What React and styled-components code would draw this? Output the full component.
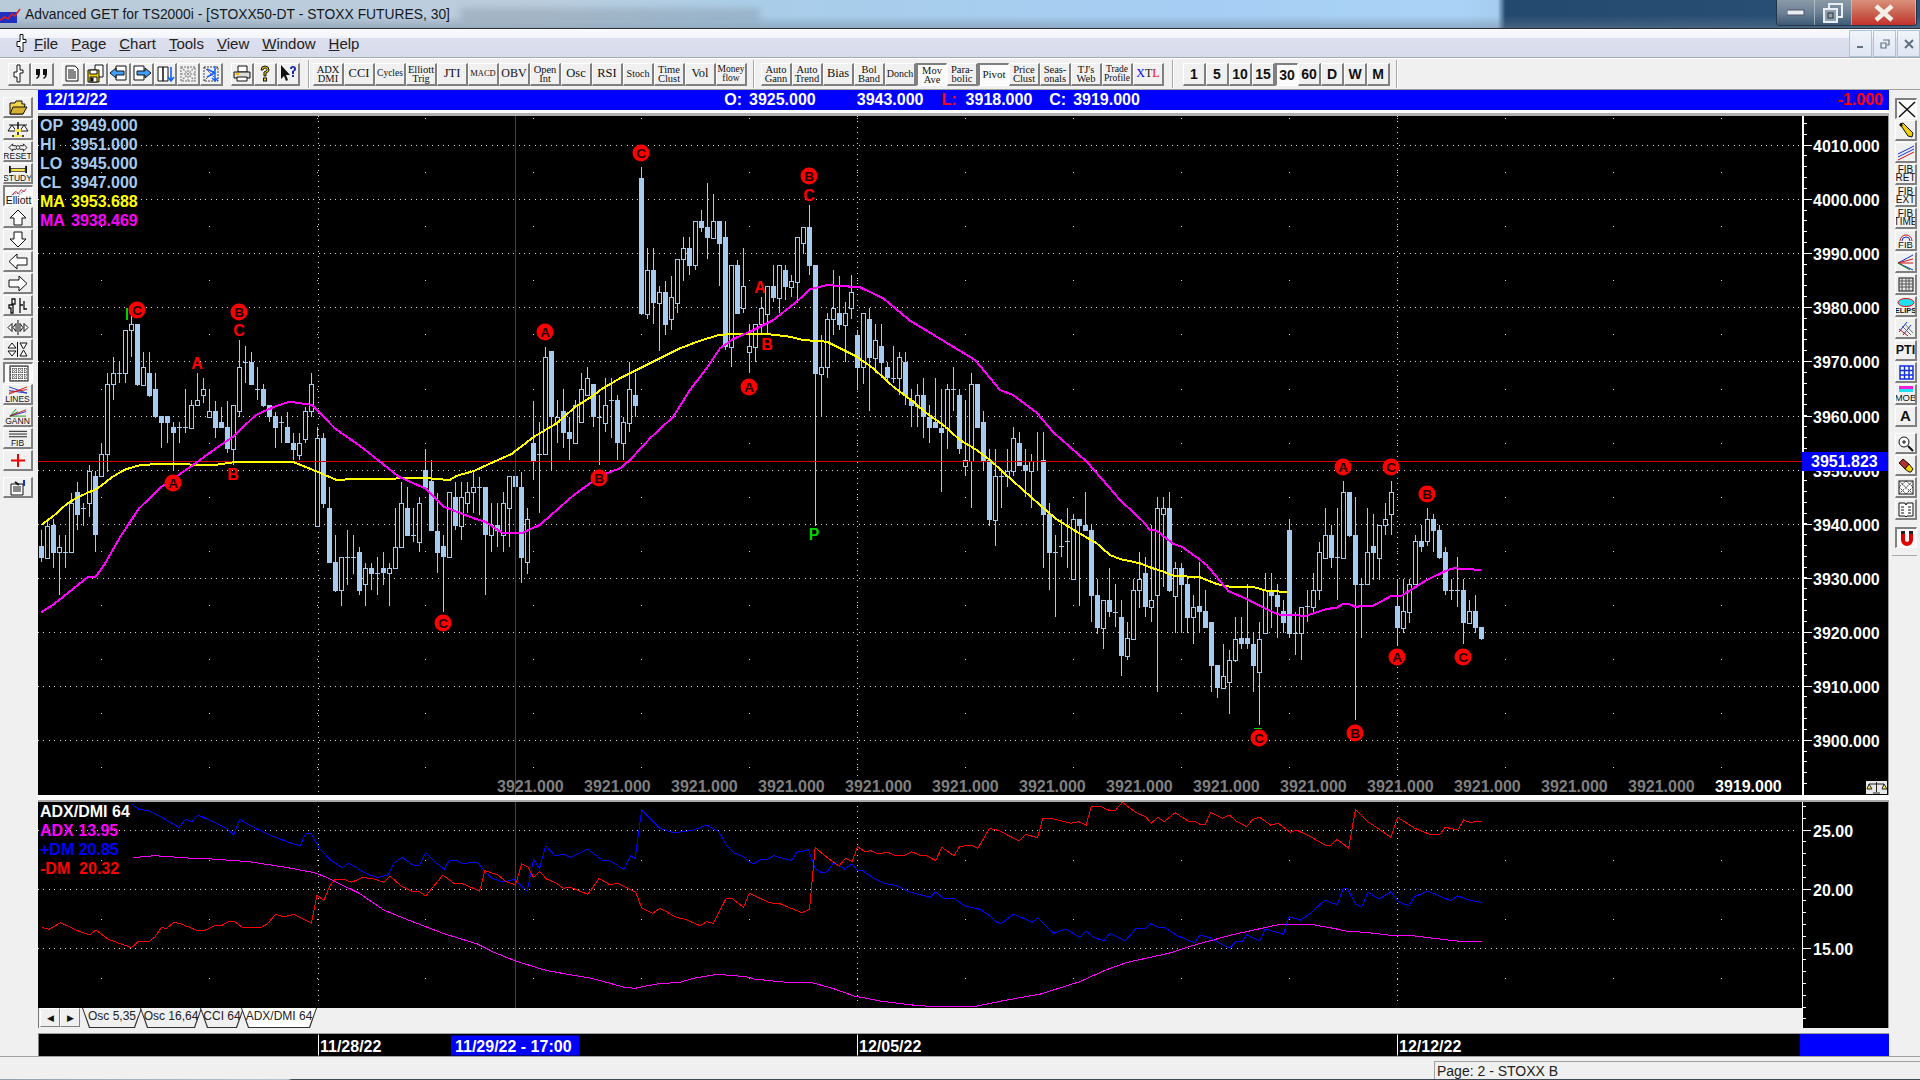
import React from "react";
import styled, { createGlobalStyle } from "styled-components";

const GlobalStyle = createGlobalStyle`
  html, body { margin: 0; padding: 0; background: #f0f0f0; }
  body { font-family: "Liberation Sans", Arial, sans-serif; overflow: hidden; }
`;

const Page = styled.div`
  width: 1920px;
  height: 1080px;
  overflow: hidden;
  display: flex;
  flex-direction: column;
  background: #f0f0f0;
`;

/* ---------- title bar ---------- */
const TitleBar = styled.div`
  height: 28px;
  flex: none;
  display: flex;
  align-items: center;
  border-bottom: 1px solid #2c3036;
  background:
    linear-gradient(180deg, rgba(150, 170, 190, 0) 55%, rgba(110, 130, 150, 0.45) 100%),
    linear-gradient(90deg, #b9cad8 0%, #bccede 28%, #a9cde9 40%, #a6cef4 62%, #a9d2f6 76%, #a6cdef 78%, #24496e 78.4%, #2a5178 100%);
`;
const TitleIcon = styled.svg`
  width: 21px;
  height: 16px;
  margin: 3px 4px 0 0;
  flex: none;
`;
const TitleText = styled.span`
  font-size: 13.85px;
  color: #14181c;
  white-space: nowrap;
`;
const Smudge = styled.div`
  width: 300px;
  height: 11px;
  margin-left: 10px;
  background: #7a8a99;
  opacity: 0.45;
  filter: blur(4px);
`;
const WinControls = styled.div`
  margin-left: auto;
  margin-right: 3px;
  height: 25px;
  align-self: flex-start;
  display: flex;
  border: 1px solid rgba(30, 45, 60, 0.8);
  border-top: none;
  border-radius: 0 0 4px 4px;
  overflow: hidden;
`;
const WinButton = styled.div`
  width: ${(p) => p.$w}px;
  display: flex;
  align-items: center;
  justify-content: center;
  border-right: 1px solid rgba(220, 230, 240, 0.5);
  background: ${(p) =>
    p.$close
      ? "linear-gradient(180deg,#d9907a 0%,#c9604f 55%,#c4302c 100%)"
      : "linear-gradient(180deg,#8b9aa8 0%,#6d8194 50%,#3d5b78 100%)"};
`;

/* ---------- menu ---------- */
const MenuBar = styled.div`
  height: 28px;
  flex: none;
  display: flex;
  align-items: center;
  padding-left: 12px;
  border-bottom: 1px solid #a8a8b0;
  background: linear-gradient(180deg, #fbfbfd 0%, #f4f5fa 30%, #dde0ef 34%, #d6dbeb 100%);
`;
const MenuIcon = styled.svg`
  width: 20px;
  height: 22px;
  margin-right: 2px;
  flex: none;
`;
const MenuItem = styled.span`
  font-size: 15px;
  color: #26221c;
  margin-right: 13px;
`;
const Mnemonic = styled.span`
  text-decoration: underline;
`;
const MdiButtons = styled.div`
  margin-left: auto;
  display: flex;
  align-self: stretch;
  margin-top: 1px;
`;
const MdiButton = styled.div`
  width: 23px;
  margin-left: 1px;
  display: flex;
  align-items: center;
  justify-content: center;
  border: 1px solid #aac4da;
  box-sizing: border-box;
  background: linear-gradient(180deg, #f0f4fa, #dfe6f3);
`;

/* ---------- toolbar ---------- */
const ToolBar = styled.div`
  height: 30px;
  flex: none;
  display: flex;
  align-items: center;
  padding-left: 8px;
  background: #f0f0f0;
  border-top: 1px solid #fff;
  border-bottom: 1px solid #a0a0a0;
  box-sizing: content-box;
`;
const ToolGroup = styled.div`
  display: flex;
  margin-left: ${(p) => p.$ml || 0}px;
`;
const ToolSep = styled.div`
  width: 1px;
  height: 28px;
  margin-left: ${(p) => p.$ml || 0}px;
  background: #a8a8a8;
  border-right: 1px solid #fff;
`;
const ToolButton = styled.div`
  width: ${(p) => p.$w}px;
  height: 23px;
  box-sizing: border-box;
  display: flex;
  flex-direction: column;
  align-items: center;
  justify-content: center;
  overflow: hidden;
  background: ${(p) => (p.$pressed ? "#fbfbfb" : "#f0f0f0")};
  border: 1px solid;
  border-width: ${(p) => (p.$pressed ? "2px 1px 1px 2px" : "1px 2px 2px 1px")};
  border-color: ${(p) => (p.$pressed ? "#808080 #fff #fff #808080" : "#fff #808080 #808080 #fff")};
  font-family: "Liberation Serif", "Times New Roman", serif;
  font-size: ${(p) => p.$size || 10.5}px;
  line-height: 9px;
  color: #111;
  white-space: nowrap;
`;
const PeriodLabel = styled.span`
  font-family: "Liberation Sans", Arial, sans-serif;
  font-size: 14px;
  font-weight: bold;
  line-height: 16px;
`;
const Tint = styled.span`
  color: ${(p) => p.$c};
  font-size: 12px;
  font-family: "Liberation Serif", serif;
`;
const XtlRow = styled.span`
  line-height: 14px;
`;
const ButtonIcon = styled.svg`
  width: 20px;
  height: 19px;
  flex: none;
`;

/* ---------- workspace ---------- */
const Workspace = styled.div`
  flex: none;
  height: 966px;
  display: flex;
`;
const Rail = styled.div`
  width: ${(p) => p.$w}px;
  flex: none;
  box-sizing: border-box;
  padding: ${(p) => p.$pad};
  display: flex;
  flex-direction: column;
  align-items: ${(p) => p.$align || "flex-start"};
  background: #f0f0f0;
`;
const RailButton = styled.div`
  width: ${(p) => p.$w}px;
  height: 21px;
  flex: none;
  margin-bottom: 1px;
  margin-top: ${(p) => p.$mt || 0}px;
  box-sizing: border-box;
  display: flex;
  flex-direction: column;
  align-items: center;
  justify-content: center;
  overflow: hidden;
  background: ${(p) => (p.$pressed ? "#fafafa" : "#f0f0f0")};
  border: 1px solid;
  border-width: ${(p) => (p.$pressed ? "2px 1px 1px 2px" : "1px 2px 2px 1px")};
  border-color: ${(p) => (p.$pressed ? "#808080 #fff #fff #808080" : "#fff #808080 #808080 #fff")};
`;
const RailRule = styled.div`
  width: 25px;
  height: 1px;
  margin: 6px 0 0 -3px;
  background: #a8a8a8;
`;
const RailIcon = styled.svg`
  width: ${(p) => p.$w || 22}px;
  height: ${(p) => p.$h || 17}px;
  flex: none;
`;
const RailText = styled.span`
  font-size: ${(p) => p.$size || 8.5}px;
  line-height: ${(p) => p.$lh || 8}px;
  font-weight: ${(p) => (p.$bold ? "bold" : "normal")};
  color: #111;
  text-align: center;
`;
const Centre = styled.div`
  width: 1851px;
  flex: none;
  display: flex;
  flex-direction: column;
`;
const QuoteBar = styled.div`
  height: 20px;
  flex: none;
  display: flex;
  align-items: center;
  padding: 0 6px 0 7px;
  background: #0000ff;
  color: #fff;
  font-size: 16px;
  font-weight: bold;
  white-space: pre;
  word-spacing: 2.5px;
  border-bottom: 3px solid #fff;
  box-sizing: content-box;
`;
const Quote = styled.span`
  margin-left: ${(p) => p.$ml || 0}px;
  color: ${(p) => p.$c || "#fff"};
`;
const Change = styled.span`
  margin-left: auto;
  color: #ff0000;
`;
const Seam = styled.div`
  height: ${(p) => p.$h}px;
  flex: none;
  background: ${(p) => p.$c};
`;
const ChartRow = styled.div`
  height: ${(p) => p.$h}px;
  flex: none;
  display: flex;
`;
const Plot = styled.div`
  position: relative;
  width: 1764px;
  height: ${(p) => p.$h}px;
  flex: none;
  background: #000;
`;
const PlotSvg = styled.svg`
  display: block;
  width: 100%;
  height: 100%;
`;
const AxisPanel = styled.div`
  width: 86px;
  flex: none;
  background: #000;
  border-right: 1px solid #9a9a9a;
`;
const Legend = styled.div`
  position: absolute;
  left: 2px;
  top: 0;
  font-size: 16px;
  font-weight: bold;
  line-height: 19px;
  white-space: pre;
`;
const LegendRow = styled.div`
  color: ${(p) => p.$c};
  display: grid;
  grid-template-columns: ${(p) => (p.$cols ? "31px auto" : "auto")};
`;
const LowerLeft = styled.div`
  width: 1764px;
  flex: none;
  display: flex;
  flex-direction: column;
`;
const TabStrip = styled.div`
  height: 20px;
  flex: none;
  display: flex;
  align-items: stretch;
  padding-left: 1px;
  background: #f0f0f0;
  border-left: 1px solid #777;
`;
const ScrollButton = styled.div`
  width: 20px;
  height: 19px;
  box-sizing: border-box;
  display: flex;
  align-items: center;
  justify-content: center;
  background: #f0f0f0;
  border: 1px solid;
  border-color: #fff #808080 #808080 #fff;
  font-size: 9px;
  color: #111;
`;
const Tab = styled.div`
  position: relative;
  width: ${(p) => p.$w}px;
  margin-left: ${(p) => p.$ml || 0}px;
  height: 20px;
  display: flex;
  align-items: flex-start;
  justify-content: center;
  font-size: 12px;
  line-height: 17px;
  color: #222;
  z-index: ${(p) => (p.$active ? 2 : 1)};

  &::before {
    content: "";
    position: absolute;
    inset: 0;
    background: #333;
    clip-path: polygon(0 0, 100% 0, calc(100% - 7px) 100%, 7px 100%);
  }
  &::after {
    content: "";
    position: absolute;
    inset: 0 1px 1px 1px;
    background: ${(p) => (p.$active ? "#fff" : "#f0f0f0")};
    clip-path: polygon(0 0, 100% 0, calc(100% - 7px) 100%, 7px 100%);
  }
`;
const TabLabel = styled.span`
  position: relative;
  z-index: 1;
`;
const DateRow = styled.div`
  height: 22px;
  flex: none;
  display: flex;
  margin-top: 5px;
  border-top: 1px solid #a0a0a0;
`;
const DateAxis = styled.div`
  width: 1762px;
  flex: none;
  background: #000;
  border-left: 1px solid #808080;
  box-sizing: border-box;
`;
const DateFill = styled.div`
  flex: 1;
  background: #0000ff;
`;
const StatusBar = styled.div`
  height: 22px;
  flex: none;
  display: flex;
  border-top: 1px solid #a0a0a0;
  background: #f0f0f0;
`;
const StatusCell = styled.div`
  margin-left: 1434px;
  margin-top: 4px;
  flex: 1;
  padding-left: 2px;
  border-top: 1px solid #a0a0a0;
  border-left: 1px solid #a0a0a0;
  font-size: 14px;
  line-height: 18px;
  color: #222;
`;
const Taskbar = styled.div`
  height: 2px;
  flex: none;
  background: linear-gradient(90deg, #8ea2b2, #b4c6d4 15%, #3d4a55 15.2%, #3d4a55 100%);
`;

/* ---------- chart data, screen pixels ---------- */
const seg1 = [
  [690,785,738,773,1],[660,775,677,773,0],[658,803,676,758,1],[705,885,740,757,0],[705,803,757,757,0],[580,757,610,757,0],
  [545,690,577,644,1],[610,677,625,625,0],[495,650,512,610,0],[512,755,528,706,1],[430,530,463,528,0],[220,515,253,463,0],
  [170,300,220,253,0],[185,250,220,220,0],[90,250,91,220,0],[30,170,72,90,0],[72,258,72,255,1],[155,255,202,255,0],
  [155,290,220,288,1],[220,353,267,350,1],[348,445,348,368,1],[348,430,348,368,1],[365,512,380,398,1],[365,428,381,381,0],
  [267,398,381,381,0],[300,385,316,383,0],[220,316,301,316,0],[235,310,268,286,0],[268,350,334,350,0],[302,414,334,383,1],
  [320,383,366,383,1],[302,460,381,448,1],[316,495,316,448,0],[120,350,202,333,0],[138,250,187,187,0],[155,255,186,254,1],
  [202,300,268,268,0],[253,320,267,318,1],[316,365,316,350,1],[335,445,348,383,1],[350,430,366,366,0],[335,430,381,430,1],
  [398,480,430,450,1],[398,480,430,465,0],[320,430,333,416,0],[220,350,253,333,0],[380,678,415,677,0],[398,625,415,611,1],
  [562,790,625,788,1],[705,875,786,872,1],[772,917,772,870,0],[690,855,772,772,0],[705,822,772,772,0],[740,885,756,872,1],
  [790,917,805,853,0],[790,870,805,822,1],[772,885,820,820,0],[755,855,805,820,1],[790,917,805,820,0],[625,805,740,805,0],
  [545,745,610,740,0],[562,708,625,708,1],[625,725,706,706,0],[592,755,610,725,0],[447,565,511,565,1],[480,692,543,692,1],
  [580,820,692,758,1],[705,935,738,772,1],[577,775,577,772,0],[545,690,592,677,1],[545,720,592,677,0],[545,640,577,610,0],
  [515,640,562,577,0],[530,645,562,562,0],[561,885,561,706,1],[610,755,676,706,0],[610,740,676,692,1],[577,755,610,706,0],
  [528,740,528,625,0],[500,690,528,562,1],[515,850,562,773,1],[625,823,658,787,0],[302,540,430,482,1],[365,640,463,463,0],
  [140,465,172,463,0],[154,512,154,350,1],[300,430,350,367,0],[268,445,333,398,1],[350,480,396,416,1],[300,430,316,430,0],
  [220,365,268,365,0],[202,285,235,285,0],[253,380,253,350,1],[285,495,350,350,0],
];
const seg2 = [
  [745,905,826,878,0],[745,925,811,811,0],[795,990,811,940,1],[860,990,877,940,0],[697,905,778,878,0],[730,860,795,827,1],
  [110,555,144,552,1],[355,568,421,551,0],[355,582,421,519,1],[468,662,487,518,0],[453,615,487,584,1],[437,600,502,568,0],
  [388,548,388,518,0],[320,452,355,388,0],[320,435,355,407,1],[274,420,274,406,0],[240,306,274,293,1],[160,387,292,323,1],
  [193,327,274,323,0],[274,467,274,341,1],[274,660,322,650,1],[406,710,406,650,0],[390,552,406,551,1],[355,550,469,535,0],
  [582,728,649,665,0],[583,697,583,650,0],[502,615,535,583,0],[469,615,469,551,0],[405,517,469,503,1],[406,550,406,503,0],
  [405,510,421,471,1],[435,500,454,470,0],[322,520,322,455,0],[292,373,292,340,0],[225,435,292,407,1],[405,1187,405,731,1],
  [615,860,712,731,0],[550,743,568,712,0],[420,615,535,568,0],[437,600,550,584,1],[517,697,550,584,0],[435,566,487,535,0],
  [600,780,616,713,1],[550,762,550,712,0],[535,842,568,683,1],[582,730,631,683,0],[582,745,648,698,1],[697,760,712,745,1],
  [648,760,745,745,0],[665,795,682,745,0],[665,825,697,797,1],[778,890,811,827,1],[762,890,795,827,0],
];
const seg3 = [
  [55,235,105,170,1],[135,248,170,203,1],[55,205,186,203,1],[88,395,203,218,1],[72,267,88,203,0],[22,152,88,88,0],
  [88,282,105,268,1],[120,347,300,317,0],[40,443,72,302,0],[72,205,72,204,1],[152,332,186,302,1],[267,497,300,479,1],
  [267,558,349,479,0],[332,444,349,349,0],[267,380,332,349,0],[202,347,235,332,0],[217,317,250,317,1],[267,410,316,332,1],
  [282,443,302,332,0],[217,332,302,302,0],[217,624,300,464,1],[430,690,462,578,1],[525,770,577,577,0],[478,590,559,559,0],
  [445,624,544,544,0],[462,660,478,658,0],[478,738,478,497,1],[397,512,495,512,1],[495,785,511,707,1],[658,822,706,803,1],
  [721,866,721,803,0],[625,770,721,755,1],
];
const seg4 = [
  [432,560,515,515,0],[480,707,531,647,1],[547,660,595,647,0],[418,600,451,596,0],[337,505,418,451,0],[350,530,400,500,1],
  [255,545,481,500,0],[172,755,205,466,0],[172,440,205,223,0],[155,456,205,453,1],[367,580,385,467,0],[370,580,385,435,1],
  [415,580,433,533,1],[465,612,500,532,0],[367,580,498,515,1],[450,565,514,563,1],[547,755,547,677,1],[677,773,676,743,1],
  [612,745,709,743,0],[630,822,661,727,0],[532,665,596,661,0],[532,628,595,613,1],[433,628,595,613,1],[580,755,613,677,1],
  [547,855,596,695,0],[400,583,451,580,0],[400,565,450,467,1],[433,595,465,500,1],[480,580,513,548,1],[237,595,270,581,1],
  [515,645,580,580,0],[500,660,500,580,0],[450,545,499,499,0],[400,515,451,500,0],[305,480,337,451,0],[205,357,286,353,0],
  [255,385,286,353,1],[205,480,352,352,0],[123,357,157,353,0],[157,290,157,288,1],[172,840,286,435,1],[418,595,433,433,0],
  [205,435,337,433,0],[222,420,319,338,1],[256,420,256,353,0],[190,285,238,256,0],[123,285,157,223,0],[418,615,498,564,1],
  [418,580,514,563,0],[418,548,433,515,0],[285,435,304,433,0],[255,335,304,320,1],[205,318,238,304,0],[222,335,238,272,1],
  [255,357,270,354,1],[320,465,337,452,1],[418,480,451,451,0],[352,500,451,451,0],[418,612,451,548,1],[480,552,514,548,0],
  [465,580,514,564,1],[561,600,561,597,1],
];

const candles = [
  ...seg1.map((c) => ({ c, oy: 300 })),
  ...seg2.map((c) => ({ c, oy: 130 })),
  ...seg3.map((c) => ({ c, oy: 360 })),
  ...seg4.map((c) => ({ c, oy: 440 })),
].map(({ c, oy }, i) => ({
  x: Math.round(41.3 + 6 * i),
  top: Math.round(oy + c[0] / 3),
  bot: Math.round(oy + c[1] / 3),
  open: Math.round(oy + c[2] / 3),
  close: Math.round(oy + c[3] / 3),
  filled: c[4] === 1,
}));

// the zoom crops were read off with these scales
const line = (list, sx, ox, oy) => {
  const out = [];
  for (let i = 0; i < list.length; i += 2) {
    out.push(`${(ox + list[i] / sx).toFixed(1)},${(oy + list[i + 1] / 3).toFixed(1)}`);
  }
  return out.join(" ");
};

const yellowMa = [
  line([30,675,60,650,100,610,130,590,180,565,220,530,250,510,285,497,335,492,410,492,440,495,490,495,540,487,640,485,700,486,770,518,815,540,860,537,1020,535,1060,535,1115,540,1135,527,1180,513,1230,487,1280,462,1340,410,1400,370,1450,320,1500,285], 2.658, 30, 300),
  line([0,780,60,745,120,715,180,685,240,655,300,632,360,614,420,612,500,612,570,620,610,630,680,635,720,655,770,680,820,715,880,770,940,815,960,833], 3, 600, 130),
  line([50,160,100,195,150,240,200,270,240,300,300,355,390,435,440,478,500,515,560,550], 3, 910, 360),
  line([30,345,60,357,120,370,150,382,190,395,220,407,300,412,350,432,390,440,460,441,500,452,560,456], 3, 1100, 440),
].join(" ");

const magentaMa = [
  line([30,937,60,915,100,880,155,830,175,830,200,790,240,710,290,625,350,560,440,490,500,440,540,410,600,345,650,320,690,305,750,315,810,385,880,440,930,485,980,530,1050,565,1100,620,1180,655,1210,665,1255,698,1310,698,1355,675,1440,590,1500,540], 2.658, 30, 300),
  line([20,1030,60,1015,90,990,150,925,220,860,270,780,320,715,360,655,400,627,450,605,520,570,590,515,630,478,680,465,780,472,850,505,930,572,960,590], 3, 600, 130),
  "975,360 1000,390 1013,395 1037,413 1053,432 1087,462",
  line([30,145,60,180,130,245,150,270,170,272,220,312,245,320,290,352,320,375,385,453,440,477,500,508,540,525,620,527,680,507,710,503,730,491,745,491,765,500,820,497,875,467,905,467,980,420,1050,387,1065,385,1144,390], 3, 1100, 440),
].join(" ");

const blueDm = [
  line([322,72,340,88,365,92,400,115,438,142,455,118,470,125,485,105,530,130,555,145,572,165,587,118,630,148,680,175,735,198,748,162,762,160,782,205,810,240,838,263,855,250,895,280,925,293,950,285,965,250,985,232,1012,255,1028,255,1043,218,1065,245,1088,268,1100,242,1118,241,1135,252,1160,246,1172,250,1188,275,1205,295,1225,303,1240,305,1258,297,1270,310,1292,333,1307,238,1322,265,1337,197,1360,228,1380,222,1397,232,1440,208,1475,240,1495,243,1528,268,1545,228,1556,235], 2.45, 0, 780),
  line([50,30,92,85,120,97,135,97,170,90,200,75,228,95,245,135,262,158,285,170,300,188,310,190,325,178,340,178,355,167,395,182,408,157,435,149,450,205,465,218,478,215,492,188,518,207,535,192,548,212,560,212,585,235,610,250,640,258,665,275,715,292,728,275,745,295,770,295,795,318,830,328,850,345,870,368,880,370,908,342,950,367,963,353,1000,400,1028,387,1060,412,1075,393,1090,410,1115,423,1130,400,1165,423,1190,385,1212,385,1225,370,1240,382,1255,382,1285,407,1325,428,1338,405,1360,413,1405,445,1420,425,1435,425,1445,405,1475,422,1488,387,1530,403], 2.306, 620, 800),
  line([22,410,50,420,75,400,110,360,140,375,155,325,165,325,185,372,200,382,215,337,243,357,272,335,290,365,315,377,330,350,362,333,390,348,418,362,435,347,455,358,495,368], 2.45, 1280, 780),
].join(" ");

const redDm = [
  line([104,443,120,448,148,428,170,440,190,452,220,465,235,450,265,478,322,503,338,485,365,485,380,470,395,443,408,445,425,428,440,430,480,450,500,452,530,435,542,437,560,425,575,425,595,443,640,442,655,432,675,403,695,410,720,403,763,430,777,345,793,362,808,318,822,297,840,297,862,307,888,292,920,298,940,307,955,288,985,320,1008,333,1025,333,1043,348,1085,285,1112,310,1135,312,1175,333,1188,272,1220,285,1240,305,1263,315,1278,252,1293,260,1307,292,1322,275,1340,298,1360,307,1380,325,1397,322,1440,343,1468,295,1495,315,1512,310], 2.45, 0, 780),
  line([0,253,36,277,50,323,75,340,92,325,130,352,150,358,185,377,200,365,215,370,245,295,260,297,285,322,298,280,345,308,370,312,400,328,420,338,437,328,450,143,480,175,505,198,520,175,535,185,548,140,565,155,578,152,592,160,620,158,632,165,658,165,672,155,690,165,708,168,728,182,742,142,770,167,783,140,810,135,825,145,852,85,875,92,920,123,935,103,963,113,975,55,995,55,1020,63,1040,70,1058,65,1075,75,1087,18,1110,20,1130,32,1142,32,1158,7,1190,38,1212,50,1225,70,1240,52,1255,65,1280,38,1310,63,1325,63,1340,75,1350,73,1362,37,1390,55,1405,45,1420,62,1445,80,1460,58,1475,52,1500,75,1518,70], 2.306, 620, 800),
  line([25,157,40,150,70,167,110,195,125,195,140,178,168,205,185,88,215,125,272,172,288,112,330,145,365,162,390,165,405,142,435,150,450,120,465,127,495,124], 2.45, 1280, 780),
].join(" ");

const magentaAdx = [
  line([325,234,350,230,380,227,470,235,520,237,610,245,700,262,770,278,800,292,880,340,940,390,1000,420,1090,462,1170,492,1210,517,1263,543,1340,572,1450,595,1530,622], 2.45, 0, 780),
  line([35,565,60,558,95,550,135,548,170,535,225,523,290,530,310,537,375,546,440,547,490,565,540,588,600,603,680,616,725,620,815,620,880,603,970,582,1060,545,1120,510,1170,487,1265,460,1330,433,1410,405,1480,385,1515,375], 2.306, 620, 800),
  line([0,433,75,433,130,445,165,454,210,457,270,466,325,467,385,476,440,484,495,484], 2.45, 1280, 780),
].join(" ");

const circled = [
  ["C",137,310],["B",239,312],["A",173,483],["C",443,623],["A",545,332],["B",599,478],["C",641,153],["B",809,176],
  ["A",749,387],["A",1343,467],["C",1391,467],["B",1427,494],["A",1397,657],["C",1463,657],["C",1259,738],["B",1355,733],
];
const plainMarks = [
  ["A",197,363,"#ff0000"],["C",239,330,"#ff0000"],["B",233,474,"#ff0000"],["A",760,287,"#ff0000"],
  ["B",767,344,"#ff0000"],["C",809,195,"#ff0000"],["P",814,534,"#00d000"],
];

const seq = (from, n, step) => Array.from({ length: n }, (_, i) => from + i * step);
const vTicks = [318, 857, 1397];

const DottedGrid = ({ rows, halves, top, bottom, right }) => (
  <g shapeRendering="crispEdges">
    {rows.map((y) => (
      <line key={y} x1="38" x2={right} y1={Math.round(y) + 0.5} y2={Math.round(y) + 0.5} stroke="#d8d8d8" strokeDasharray="1 4.4" />
    ))}
    {vTicks.map((x) => (
      <line key={x} x1={x + 0.5} x2={x + 0.5} y1={top} y2={bottom} stroke="#d8d8d8" strokeDasharray="1 4.4" />
    ))}
    {halves.map((y) =>
      seq(101, 16, 108).map((x) => <rect key={`${x}-${y}`} x={x} y={Math.round(y)} width="1" height="1" fill="#d8d8d8" />)
    )}
  </g>
);

const Candles = () => (
  <g shapeRendering="crispEdges">
    {candles.map((k) => (
      <g key={k.x}>
        <rect x={k.x} y={k.top} width="1" height={k.bot - k.top} fill="#a6caf0" />
        {k.open === k.close ? (
          <rect x={k.x - 2} y={k.open} width="5" height="1" fill="#a6caf0" />
        ) : k.filled ? (
          <rect x={k.x - 2} y={k.open} width="5" height={k.close - k.open} fill="#a6caf0" />
        ) : (
          <rect x={k.x - 1.5} y={k.open + 0.5} width="4" height={k.close - k.open} fill="#000" stroke="#a6caf0" />
        )}
      </g>
    ))}
  </g>
);

const MainPlot = () => (
  <PlotSvg viewBox="38 116 1764 679">
    <DottedGrid rows={seq(145, 12, 54.1)} halves={seq(118, 13, 54.1)} top={116} bottom={795} right={1800} />
    <Candles />
    <g shapeRendering="crispEdges">
      <rect x="515" y="116" width="1" height="679" fill="#d80000" />
      <rect x="38" y="461" width="1764" height="1" fill="#d80000" />
      <polyline points={yellowMa} fill="none" stroke="#ffff00" strokeWidth="2" />
      <polyline points={magentaMa} fill="none" stroke="#ff00ff" strokeWidth="2" />
      <rect x="126" y="308" width="2" height="12" fill="#00d000" />
      <rect x="1254" y="728" width="8" height="1" fill="#00d000" />
    </g>
    {circled.map(([t, x, y]) => (
      <g key={`${t}${x}`}>
        <circle cx={x} cy={y} r="8.5" fill="#ff0000" />
        <text x={x} y={y + 5} textAnchor="middle" fontSize="13.5" fontWeight="bold" fontFamily="Liberation Sans" fill="#1a0000">{t}</text>
      </g>
    ))}
    {plainMarks.map(([t, x, y, c]) => (
      <text key={`${t}${x}`} x={x} y={y + 6} textAnchor="middle" fontSize="16" fontFamily="Liberation Sans" fontWeight="bold" fill={c}>{t}</text>
    ))}
    {seq(497, 15, 87).map((x, i) => (
      <text key={x} x={x} y="792" fontSize="16" fontWeight="bold" fontFamily="Liberation Sans" fill={i === 14 ? "#fff" : "#808080"}>
        {i === 14 ? "3919.000" : "3921.000"}
      </text>
    ))}
  </PlotSvg>
);

const MainAxis = () => (
  <PlotSvg viewBox="1802 116 86 679">
    <rect x="1802" y="116" width="2" height="679" fill="#fff" shapeRendering="crispEdges" />
    {seq(123, 62, 10.82).map((y) => (
      <rect key={y} x="1804" y={Math.round(y)} width="3" height="1" fill="#fff" shapeRendering="crispEdges" />
    ))}
    {seq(4010, 12, -10).map((p, i) => (
      <g key={p}>
        <rect x="1804" y={Math.round(145 + i * 54.1)} width="8" height="1" fill="#fff" />
        <text x="1813" y={Math.round(145 + i * 54.1) + 7} fontSize="16" fontWeight="bold" fontFamily="Liberation Sans" fill="#fff">{p}.000</text>
      </g>
    ))}
    <rect x="1802" y="452" width="86" height="19" fill="#0000ff" />
    <text x="1811" y="467" fontSize="16" fontWeight="bold" fontFamily="Liberation Sans" fill="#fff">3951.823</text>
    <g transform="translate(1866 781)">
      <rect width="21" height="13" fill="#e8e8e8" />
      <path d="M10.5 1v10M3 3h15M3 3l-2 5h5zM18 3l-2 5h5zM7 12h7" stroke="#222" fill="#ffe84a" strokeWidth="1" />
    </g>
  </PlotSvg>
);

const SubPlot = () => (
  <PlotSvg viewBox="38 802 1764 206">
    <DottedGrid rows={[830, 889, 948]} halves={[860, 919, 978]} top={806} bottom={1003} right={1795} />
    <g shapeRendering="crispEdges" fill="none" strokeWidth="1">
      <rect x="515" y="802" width="1" height="206" fill="#d80000" />
      <polyline points={magentaAdx} stroke="#ff00ff" />
      <polyline points={blueDm} stroke="#0000ff" />
      <polyline points={redDm} stroke="#ff0000" />
    </g>
  </PlotSvg>
);

const SubAxis = () => (
  <PlotSvg viewBox="1802 802 86 226">
    <rect x="1800" y="802" width="3" height="226" fill="#fff" shapeRendering="crispEdges" />
    {seq(806, 19, 11.8).map((y) => (
      <rect key={y} x="1803" y={Math.round(y)} width="3" height="1" fill="#fff" shapeRendering="crispEdges" />
    ))}
    {[["25.00", 830], ["20.00", 889], ["15.00", 948]].map(([t, y]) => (
      <g key={t}>
        <rect x="1803" y={y} width="8" height="1" fill="#fff" />
        <text x="1813" y={y + 7} fontSize="16" fontWeight="bold" fontFamily="Liberation Sans" fill="#fff">{t}</text>
      </g>
    ))}
  </PlotSvg>
);

const DateStrip = () => (
  <PlotSvg viewBox="39 1034 1761 21">
    <rect x="318" y="1034" width="1" height="21" fill="#fff" />
    <rect x="857" y="1034" width="1" height="21" fill="#fff" />
    <rect x="1397" y="1034" width="1" height="21" fill="#fff" />
    <rect x="451" y="1035" width="128" height="20" fill="#0000ff" />
    <g fontSize="16" fontWeight="bold" fontFamily="Liberation Sans" fill="#fff">
      <text x="320" y="1051">11/28/22</text>
      <text x="455" y="1051">11/29/22 - 17:00</text>
      <text x="859" y="1051">12/05/22</text>
      <text x="1399" y="1051">12/12/22</text>
    </g>
  </PlotSvg>
);

/* ---------- icon drawings ---------- */
const s = { stroke: "#111", strokeWidth: 1, fill: "none" };
const page = "M3 2h9l3 3v12H3z";
const CrossDoc = () => <path d="M8 1h3v5h3v3h-3v9H8v-5H5V8h3z" fill="#fff" stroke="#111" />;

const toolIcons = {
  cross: <CrossDoc />,
  quotes: (
    <g fill="#111">
      <path d="M4 5h4v5q0 3-3 5l-1-1q2-1 2-3H4zM11 5h4v5q0 3-3 5l-1-1q2-1 2-3h-2z" />
    </g>
  ),
  doc: (
    <g {...s}>
      <path d={page} fill="#fff" />
      <path d="M5 6h6M5 8h8M5 10h8M5 12h8M5 14h8" />
    </g>
  ),
  save: (
    <g {...s}>
      <path d="M9 1h8v12H9z" fill="#fff" />
      <path d="M2 6h11v12H2z" fill="#f2d000" />
      <path d="M4 6h7v4H4zM4 13h7v5H4z" fill="#fff" />
      <rect x="5" y="14" width="2" height="3" fill="#111" />
    </g>
  ),
  left: (
    <g {...s}>
      <path d="M7 2h10v14H7z" fill="#fff" />
      <path d="M1 9l6-5v3h8v4H7v3z" fill="#3fa0ff" />
    </g>
  ),
  right: (
    <g {...s}>
      <path d="M2 2h10v14H2z" fill="#fff" />
      <path d="M19 9l-6-5v3H5v4h8v3z" fill="#3fa0ff" />
    </g>
  ),
  book: (
    <g {...s}>
      <path d="M3 3h5v14H3zM8 3h5v14H8z" fill="#fff" />
      <path d="M16 3v13M13 13l3 4 3-4" stroke="#1060ff" strokeWidth="1.6" />
    </g>
  ),
  mesh: (
    <g stroke="#999" strokeWidth="1.5" fill="none">
      <path d="M3 3l14 14M17 3L3 17M3 10h14M10 3v14M3 3h14v14H3z" strokeDasharray="2 1" />
    </g>
  ),
  meshArrows: (
    <g fill="none">
      <path d="M3 3l14 14M17 3L3 17M3 3h14v14H3z" stroke="#444" strokeDasharray="2 1" />
      <path d="M14 2v15M11 14l3 3 3-3M6 5l8 4-8 4" stroke="#1060ff" strokeWidth="1.4" />
    </g>
  ),
  printer: (
    <g {...s}>
      <path d="M6 2h9v6H6z" fill="#fff" />
      <path d="M2 8h16v6H2z" fill="#ddd" />
      <path d="M5 13h10v4H5z" fill="#fff" />
      <path d="M4 10h3" stroke="#f0c000" strokeWidth="2" />
    </g>
  ),
  help: (
    <g>
      <path d="M6 6q0-4 4-4t4 4q0 2-3 3v3H9V8q3-1 3-2.500T10 4 8 6z" fill="#f2d000" stroke="#111" />
      <rect x="8.500" y="14" width="3" height="3" fill="#f2d000" stroke="#111" />
    </g>
  ),
  whatsThis: (
    <g>
      <path d="M3 1v14l3-3 2 5 2-1-2-5h4z" fill="#111" />
      <path d="M12 5q0-3 3-3t3 3q0 2-2 2.500V10h-2V7q2-.5 2-2t-1-1.500-1 1.500z" fill="#1c2ca0" />
      <rect x="14" y="11" width="2" height="2" fill="#1c2ca0" />
    </g>
  ),
};

const railArrow = {
  up: "11,1 3,9 7,9 7,16 15,16 15,9 19,9",
  down: "11,16 3,8 7,8 7,1 15,1 15,8 19,8",
  left: "2,8.500 10,1 10,5 20,5 20,12 10,12 10,16",
  right: "20,8.500 12,1 12,5 2,5 2,12 12,12 12,16",
};

const Arrow = ({ dir }) => (
  <RailIcon viewBox="0 0 22 17">
    <polygon points={railArrow[dir]} fill="#fff" stroke="#111" />
  </RailIcon>
);

const ScaleGlyph = () => (
  <g>
    <path d="M11 1v13M5 15h12" stroke="#111" strokeWidth="1.5" />
    <path d="M2 4h18" stroke="#111" />
    <path d="M5 4l-4 6h8zM17 4l-4 6h8z" fill="#fff" stroke="#111" />
    <path d="M8 8h6v3H8zM7 14h8v2H7z" fill="#ffe84a" stroke="none" />
  </g>
);

const leftRail = [
  { key: "open", body: <RailIcon viewBox="0 0 22 17"><path d="M3 4h5l1-2h6v3h3l-2 10H3z" fill="#f2d44a" stroke="#111" /><path d="M3 15l3-7h14l-4 7z" fill="#d8b030" stroke="#111" /></RailIcon> },
  { key: "scale", body: <RailIcon viewBox="0 0 22 17"><ScaleGlyph /></RailIcon> },
  { key: "reset", body: <><RailIcon $h={9} viewBox="0 0 22 10"><path d="M1 5l4-4v2h4M1 5l4 4V7h4M21 5l-4-4v2h-4M21 5l-4 4V7h-4" fill="none" stroke="#111" /><circle cx="11" cy="5" r="2" fill="#fff" stroke="#111" /></RailIcon><RailText>RESET</RailText></> },
  { key: "study", body: <><RailIcon $h={9} viewBox="0 0 22 10"><rect x="1" y="1" width="2" height="8" fill="#111" /><rect x="19" y="1" width="2" height="8" fill="#111" /><rect x="3" y="4" width="16" height="3" fill="#ffe84a" stroke="#111" strokeWidth=".8" /></RailIcon><RailText>STUDY</RailText></> },
  { key: "elliott", pressed: true, body: <><RailIcon $h={8} viewBox="0 0 22 10"><polyline points="2,9 7,4 10,7 14,2 17,5 20,1" fill="none" stroke="#d01010" /><polyline points="3,8 8,6 12,8 18,2" fill="none" stroke="#1030d0" strokeDasharray="2 1" /></RailIcon><RailText $size={10.5} $lh={9}>Elliott</RailText></> },
  { key: "up", body: <Arrow dir="up" /> },
  { key: "down", body: <Arrow dir="down" /> },
  { key: "left", body: <Arrow dir="left" /> },
  { key: "right", body: <Arrow dir="right" /> },
  { key: "bars", body: <RailIcon viewBox="0 0 22 17"><path d="M2 8h3V2h3v5H6v9H4V11H2zM13 1v15M17 4v8h3M13 8h3" fill="#fff" stroke="#111" strokeWidth="1.300" /></RailIcon> },
  { key: "hzoom", body: <RailIcon viewBox="0 0 22 17"><path d="M1 8.500l4-4v8zM9 4.500l-3 4 3 4zM13 4.500l3 4-3 4zM21 8.500l-4-4v8z" fill="#fff" stroke="#111" /><path d="M11 1v15" stroke="#111" /></RailIcon> },
  { key: "vzoom", body: <RailIcon viewBox="0 0 22 17"><path d="M5 2l4 5H1zM5 15l4-5H1zM13 2h7l-3.500 6zM13 15h7l-3.500-6z" fill="#fff" stroke="#111" /><path d="M10.500 1v15" stroke="#111" /></RailIcon> },
  { key: "dots", pressed: true, mt: 1, body: <RailIcon viewBox="0 0 22 17"><rect x="2" y="1" width="18" height="15" fill="#fff" stroke="#111" /><path d="M2 4h18M2 7h18M2 10h18M2 13h18M5 1v15M8 1v15M11 1v15M14 1v15M17 1v15" stroke="#222" strokeDasharray="1 1" /></RailIcon> },
  { key: "lines", body: <><RailIcon $h={9} viewBox="0 0 22 10"><path d="M1 1l20 7M1 5l20 3" stroke="#1030d0" /><path d="M1 9L21 1M1 7l20-3" stroke="#d01010" /></RailIcon><RailText>LINES</RailText></> },
  { key: "gann", body: <><RailIcon $h={9} viewBox="0 0 22 10"><path d="M2 9l7-8M2 9l9-5M2 9h18" stroke="#109010" /><path d="M2 9l18-5" stroke="#1030d0" /><path d="M2 9L20 2" stroke="#d01010" /></RailIcon><RailText>GANN</RailText></> },
  { key: "fib", body: <><RailIcon $h={9} viewBox="0 0 22 10"><path d="M1 1.500h20M1 4.500h20M1 7.500h20" stroke="#111" /></RailIcon><RailText>FIB</RailText></> },
  { key: "aim", body: <RailIcon viewBox="0 0 22 17"><path d="M11 2v13M4 8.500h14" stroke="#ee0000" strokeWidth="2" /></RailIcon> },
  { key: "note", mt: 5, body: <RailIcon viewBox="0 0 22 17"><path d="M4 5h12v11H4z" fill="#fff" stroke="#111" /><path d="M6 8h8M6 10h8M6 12h8" stroke="#111" /><path d="M8 3l4 3" stroke="#111" strokeWidth="2" /><rect x="16" y="1" width="2" height="6" fill="#1030d0" /></RailIcon> },
];

const fibText = (a, b) => (
  <RailText $size={10} $lh={8.5}>{a}<br />{b}</RailText>
);

const rightRail = [
  { key: "x", pressed: true, body: <RailIcon $w={18} viewBox="0 0 18 17"><path d="M1 1l16 15M17 1L1 16" stroke="#111" strokeWidth="1.500" /></RailIcon> },
  { key: "pencil", body: <RailIcon $w={18} viewBox="0 0 18 17"><path d="M3 2l3-1 10 10-1 4-4-1z" fill="#f2d000" stroke="#111" /><path d="M3 2l2 2" stroke="#111" strokeWidth="2.500" /></RailIcon> },
  { key: "strokes", body: <RailIcon $w={18} viewBox="0 0 18 17"><path d="M1 10l16-8M1 13l16-8" stroke="#1030d0" /><path d="M1 16l16-8" stroke="#d01010" /></RailIcon> },
  { key: "fr", body: fibText("FIB", "RET") },
  { key: "fe", body: fibText("FIB", "EXT") },
  { key: "ft", body: fibText("FIB", "TIME") },
  { key: "arc", body: <><RailIcon $w={18} $h={9} viewBox="0 0 18 9"><path d="M3 9a6 6 0 0 1 12 0" stroke="#d01010" fill="none" /><path d="M5 9a4 4 0 0 1 8 0" stroke="#1030d0" fill="none" /></RailIcon><RailText $size={9.5}>FIB</RailText></> },
  { key: "fan", body: <RailIcon $w={18} viewBox="0 0 18 17"><path d="M1 9L16 1M1 9l15 7" stroke="#1030d0" /><path d="M1 9h15M1 9l15-4" stroke="#d01010" /><path d="M1 9l12 7" stroke="#109010" /></RailIcon> },
  { key: "grid", body: <RailIcon $w={18} viewBox="0 0 18 17"><rect x="2" y="2" width="14" height="13" fill="#e8e8e8" stroke="#111" /><path d="M2 5h14M2 8h14M2 11h14M5 2v13M9 2v13M12 2v13" stroke="#555" /></RailIcon> },
  { key: "elips", body: <><RailIcon $w={18} $h={9} viewBox="0 0 18 9"><ellipse cx="9" cy="4.500" rx="8" ry="4" fill="#20e0f0" stroke="#e01010" /></RailIcon><RailText $size={7.5} $bold>ELIPS</RailText></> },
  { key: "hatch", body: <RailIcon $w={18} viewBox="0 0 18 17"><path d="M2 12l8-10M6 15l8-10" stroke="#1030d0" /><path d="M5 6l9 9M8 4l8 9" stroke="#777" /><path d="M2 9l9 7" stroke="#d01010" /></RailIcon> },
  { key: "pti", body: <RailText $size={12.5} $lh={14} $bold>PTI</RailText> },
  { key: "table", body: <RailIcon $w={18} viewBox="0 0 18 17"><rect x="3" y="2" width="13" height="13" fill="#fff" stroke="#1030e0" strokeWidth="1.500" /><path d="M3 6.500h13M3 11h13M7.500 2v13M12 2v13" stroke="#1030e0" strokeWidth="1.500" /></RailIcon> },
  { key: "mob", body: <><RailIcon $w={18} $h={7} viewBox="0 0 18 7"><rect x="2" y="0" width="14" height="3" fill="#f020e0" /><rect x="2" y="3" width="14" height="3" fill="#20e0f0" /></RailIcon><RailText $size={9.5} $lh={9}>MOB</RailText></> },
  { key: "font", body: <RailText $size={15} $lh={16} $bold>A</RailText> },
  { key: "lens", mt: 5, body: <RailIcon $w={18} viewBox="0 0 18 17"><circle cx="7" cy="7" r="5" fill="#fff" stroke="#111" /><path d="M11 11l5 5" stroke="#111" strokeWidth="2" /><path d="M5 7h4M7 5v4" stroke="#111" /></RailIcon> },
  { key: "eraser", body: <RailIcon $w={18} viewBox="0 0 18 17"><path d="M2 6l4-4 6 5-4 5z" fill="#b03030" stroke="#111" /><path d="M8 12l4-5 4 5-2 3h-2z" fill="#f2d000" stroke="#111" /></RailIcon> },
  { key: "weave", body: <RailIcon $w={18} viewBox="0 0 18 17"><rect x="2" y="2" width="14" height="13" fill="#fff" stroke="#111" /><path d="M2 2l14 13M16 2L2 15M9 2l7 6-7 7-7-7z" stroke="#333" strokeDasharray="2 1" fill="none" /></RailIcon> },
  { key: "book", body: <RailIcon $w={18} viewBox="0 0 18 17"><path d="M2 2h6l1 2 1-2h6v13h-6l-1 1-1-1H2z" fill="#fff" stroke="#111" /><path d="M4 6h3M4 9h3M4 12h3M11 6h3M11 9h3M11 12h3" stroke="#111" /></RailIcon> },
  { key: "magnet", pressed: true, mt: 6, body: <RailIcon $w={18} viewBox="0 0 18 17"><path d="M3 1h4v9a2 2 0 0 0 4 0V1h4v9a6 6 0 0 1-12 0z" fill="#e00000" /><path d="M3 1h4v3H3zM11 1h4v3h-4z" fill="#222" /></RailIcon> },
];

const studyButtons = [
  ["ADX", "DMI"], ["CCI"], ["Cycles"], ["Elliott", "Trig"], ["JTI"], ["MACD"], ["OBV"], ["Open", "Int"], ["Osc"], ["RSI"], ["Stoch"], ["Time", "Clust"], ["Vol"], ["Money", "flow"],
];
const traderButtons = [
  ["Auto", "Gann"], ["Auto", "Trend"], ["Bias"], ["Bol", "Band"], ["Donch"], ["Mov", "Ave"], ["Para-", "bolic"], ["Pivot"], ["Price", "Clust"], ["Seas-", "onals"], ["TJ's", "Web"], ["Trade", "Profile"],
];
const pressedLabels = ["Mov", "Pivot"];
const periods = ["1", "5", "10", "15", "30", "60", "D", "W", "M"];
const menus = ["File", "Page", "Chart", "Tools", "View", "Window", "Help"];
const labelSizes = { MACD: 8.5, Cycles: 9.5, Donch: 10, Stoch: 10, Money: 9.5, Profile: 9.5, Trade: 9.5, CCI: 12.5, JTI: 12.5, OBV: 12, Osc: 12.5, RSI: 12.5, Vol: 12.5, Bias: 12.5, Pivot: 11 };

const TextButton = ({ lines }) => (
  <ToolButton $w={31} $size={labelSizes[lines[0]]} $pressed={pressedLabels.includes(lines[0])}>
    {lines.map((t) => <span key={t}>{t}</span>)}
  </ToolButton>
);

const IconButton = ({ name }) => (
  <ToolButton $w={23}>
    <ButtonIcon viewBox="0 0 20 19">{toolIcons[name]}</ButtonIcon>
  </ToolButton>
);

const tabs = [
  { label: "Osc 5,35", w: 60, ml: 2 },
  { label: "Osc 16,64", w: 62, ml: -2 },
  { label: "CCI 64", w: 44, ml: -2 },
  { label: "ADX/DMI 64", w: 76, ml: -3, active: true },
];

export default function App() {
  return (
    <Page>
      <GlobalStyle />
      <TitleBar>
        <TitleIcon viewBox="0 0 21 16">
          <rect x="0" y="4" width="17" height="11" fill="#2030c0" />
          <polyline points="0,12 5,9 8,11 12,6 15,8 20,1" fill="none" stroke="#e02020" strokeWidth="1.500" />
        </TitleIcon>
        <TitleText>Advanced GET for TS2000i - [STOXX50-DT - STOXX FUTURES, 30]</TitleText>
        <Smudge />
        <WinControls>
          <WinButton $w={37}>
            <svg width="18" height="8" viewBox="0 0 18 8"><rect y="1" width="17" height="5" fill="#e8eef4" stroke="#556" /></svg>
          </WinButton>
          <WinButton $w={36}>
            <svg width="20" height="20" viewBox="0 0 20 20"><rect x="6" y="1" width="13" height="13" fill="none" stroke="#e8eef4" strokeWidth="2" /><rect x="1" y="6" width="13" height="13" fill="#8fa0b0" stroke="#e8eef4" strokeWidth="2" /><rect x="5" y="10" width="5" height="5" fill="none" stroke="#333" /></svg>
          </WinButton>
          <WinButton $w={63} $close>
            <svg width="22" height="18" viewBox="0 0 22 18"><path d="M3 2l16 14M19 2L3 16" stroke="#f2efe8" strokeWidth="4.500" /></svg>
          </WinButton>
        </WinControls>
      </TitleBar>

      <MenuBar>
        <MenuIcon viewBox="0 0 20 19"><CrossDoc /></MenuIcon>
        {menus.map((m) => (
          <MenuItem key={m}><Mnemonic>{m[0]}</Mnemonic>{m.slice(1)}</MenuItem>
        ))}
        <MdiButtons>
          <MdiButton><svg width="10" height="10" viewBox="0 0 10 10"><rect x="1" y="7" width="6" height="2" fill="#607080" /></svg></MdiButton>
          <MdiButton><svg width="10" height="10" viewBox="0 0 10 10"><path d="M3 1h6v5H7M1 4h5v5H1z" fill="none" stroke="#607080" strokeWidth="1.200" /></svg></MdiButton>
          <MdiButton><svg width="10" height="10" viewBox="0 0 10 10"><path d="M1 1l8 8M9 1L1 9" stroke="#607080" strokeWidth="2" /></svg></MdiButton>
        </MdiButtons>
      </MenuBar>

      <ToolBar>
        <ToolGroup>
          <IconButton name="cross" />
          <IconButton name="quotes" />
        </ToolGroup>
        <ToolGroup $ml={8}>
          {["doc", "save", "left", "right", "book", "mesh", "meshArrows"].map((n) => <IconButton key={n} name={n} />)}
        </ToolGroup>
        <ToolGroup $ml={8}>
          {["printer", "help", "whatsThis"].map((n) => <IconButton key={n} name={n} />)}
        </ToolGroup>
        <ToolSep $ml={8} />
        <ToolGroup $ml={3}>
          {studyButtons.map((l) => <TextButton key={l[0]} lines={l} />)}
        </ToolGroup>
        <ToolSep $ml={6} />
        <ToolGroup $ml={6}>
          {traderButtons.map((l) => <TextButton key={l.join()} lines={l} />)}
          <ToolButton $w={31}>
            <XtlRow><Tint $c="#0000ff">X</Tint><Tint $c="#222">T</Tint><Tint $c="#ff0000">L</Tint></XtlRow>
          </ToolButton>
        </ToolGroup>
        <ToolSep $ml={8} />
        <ToolGroup $ml={9}>
          {periods.map((p) => (
            <ToolButton key={p} $w={23} $pressed={p === "30"}><PeriodLabel>{p}</PeriodLabel></ToolButton>
          ))}
        </ToolGroup>
        <ToolSep $ml={6} />
      </ToolBar>

      <Workspace>
        <Rail $w={38} $pad="7px 0 0 3px">
          {leftRail.map((b) => (
            <RailButton key={b.key} $w={30} $pressed={b.pressed} $mt={b.mt}>{b.body}</RailButton>
          ))}
        </Rail>

        <Centre>
          <QuoteBar>
            <span>12/12/22</span>
            <Quote $ml={617}>O: 3925.000</Quote>
            <Quote $ml={41}>3943.000</Quote>
            <Quote $ml={18} $c="#ff0000">L:</Quote>
            <Quote $ml={9}>3918.000</Quote>
            <Quote $ml={17}>C: 3919.000</Quote>
            <Change>-1.000</Change>
          </QuoteBar>
          <Seam $h={3} $c="#b0b0b0" />
          <ChartRow $h={679}>
            <Plot $h={679}>
              <MainPlot />
              <Legend>
                <LegendRow $cols $c="#a6caf0"><span>OP</span><span>3949.000</span></LegendRow>
                <LegendRow $cols $c="#a6caf0"><span>HI</span><span>3951.000</span></LegendRow>
                <LegendRow $cols $c="#a6caf0"><span>LO</span><span>3945.000</span></LegendRow>
                <LegendRow $cols $c="#a6caf0"><span>CL</span><span>3947.000</span></LegendRow>
                <LegendRow $cols $c="#ffff00"><span>MA</span><span>3953.688</span></LegendRow>
                <LegendRow $cols $c="#ff00ff"><span>MA</span><span>3938.469</span></LegendRow>
              </Legend>
            </Plot>
            <AxisPanel><MainAxis /></AxisPanel>
          </ChartRow>
          <Seam $h={5} $c="#fff" />
          <Seam $h={2} $c="#a8a8a8" />
          <ChartRow $h={226}>
            <LowerLeft>
              <Plot $h={206}>
                <SubPlot />
                <Legend>
                  <LegendRow $c="#fff">ADX/DMI 64</LegendRow>
                  <LegendRow $c="#ff00ff">ADX 13.95</LegendRow>
                  <LegendRow $c="#0000ff">+DM 20.85</LegendRow>
                  <LegendRow $c="#ff0000">-DM  20.32</LegendRow>
                </Legend>
              </Plot>
              <TabStrip>
                <ScrollButton>◀</ScrollButton>
                <ScrollButton>▶</ScrollButton>
                {tabs.map((t) => (
                  <Tab key={t.label} $w={t.w} $ml={t.ml} $active={t.active}><TabLabel>{t.label}</TabLabel></Tab>
                ))}
              </TabStrip>
            </LowerLeft>
            <AxisPanel><SubAxis /></AxisPanel>
          </ChartRow>
          <DateRow>
            <DateAxis><DateStrip /></DateAxis>
            <DateFill />
          </DateRow>
        </Centre>

        <Rail $w={31} $pad="8px 0 0 6px">
          {rightRail.map((b) => (
            <RailButton key={b.key} $w={22} $pressed={b.pressed} $mt={b.mt}>{b.body}</RailButton>
          ))}
          <RailRule />
        </Rail>
      </Workspace>

      <StatusBar>
        <StatusCell>Page: 2 - STOXX B</StatusCell>
      </StatusBar>
      <Taskbar />
    </Page>
  );
}
